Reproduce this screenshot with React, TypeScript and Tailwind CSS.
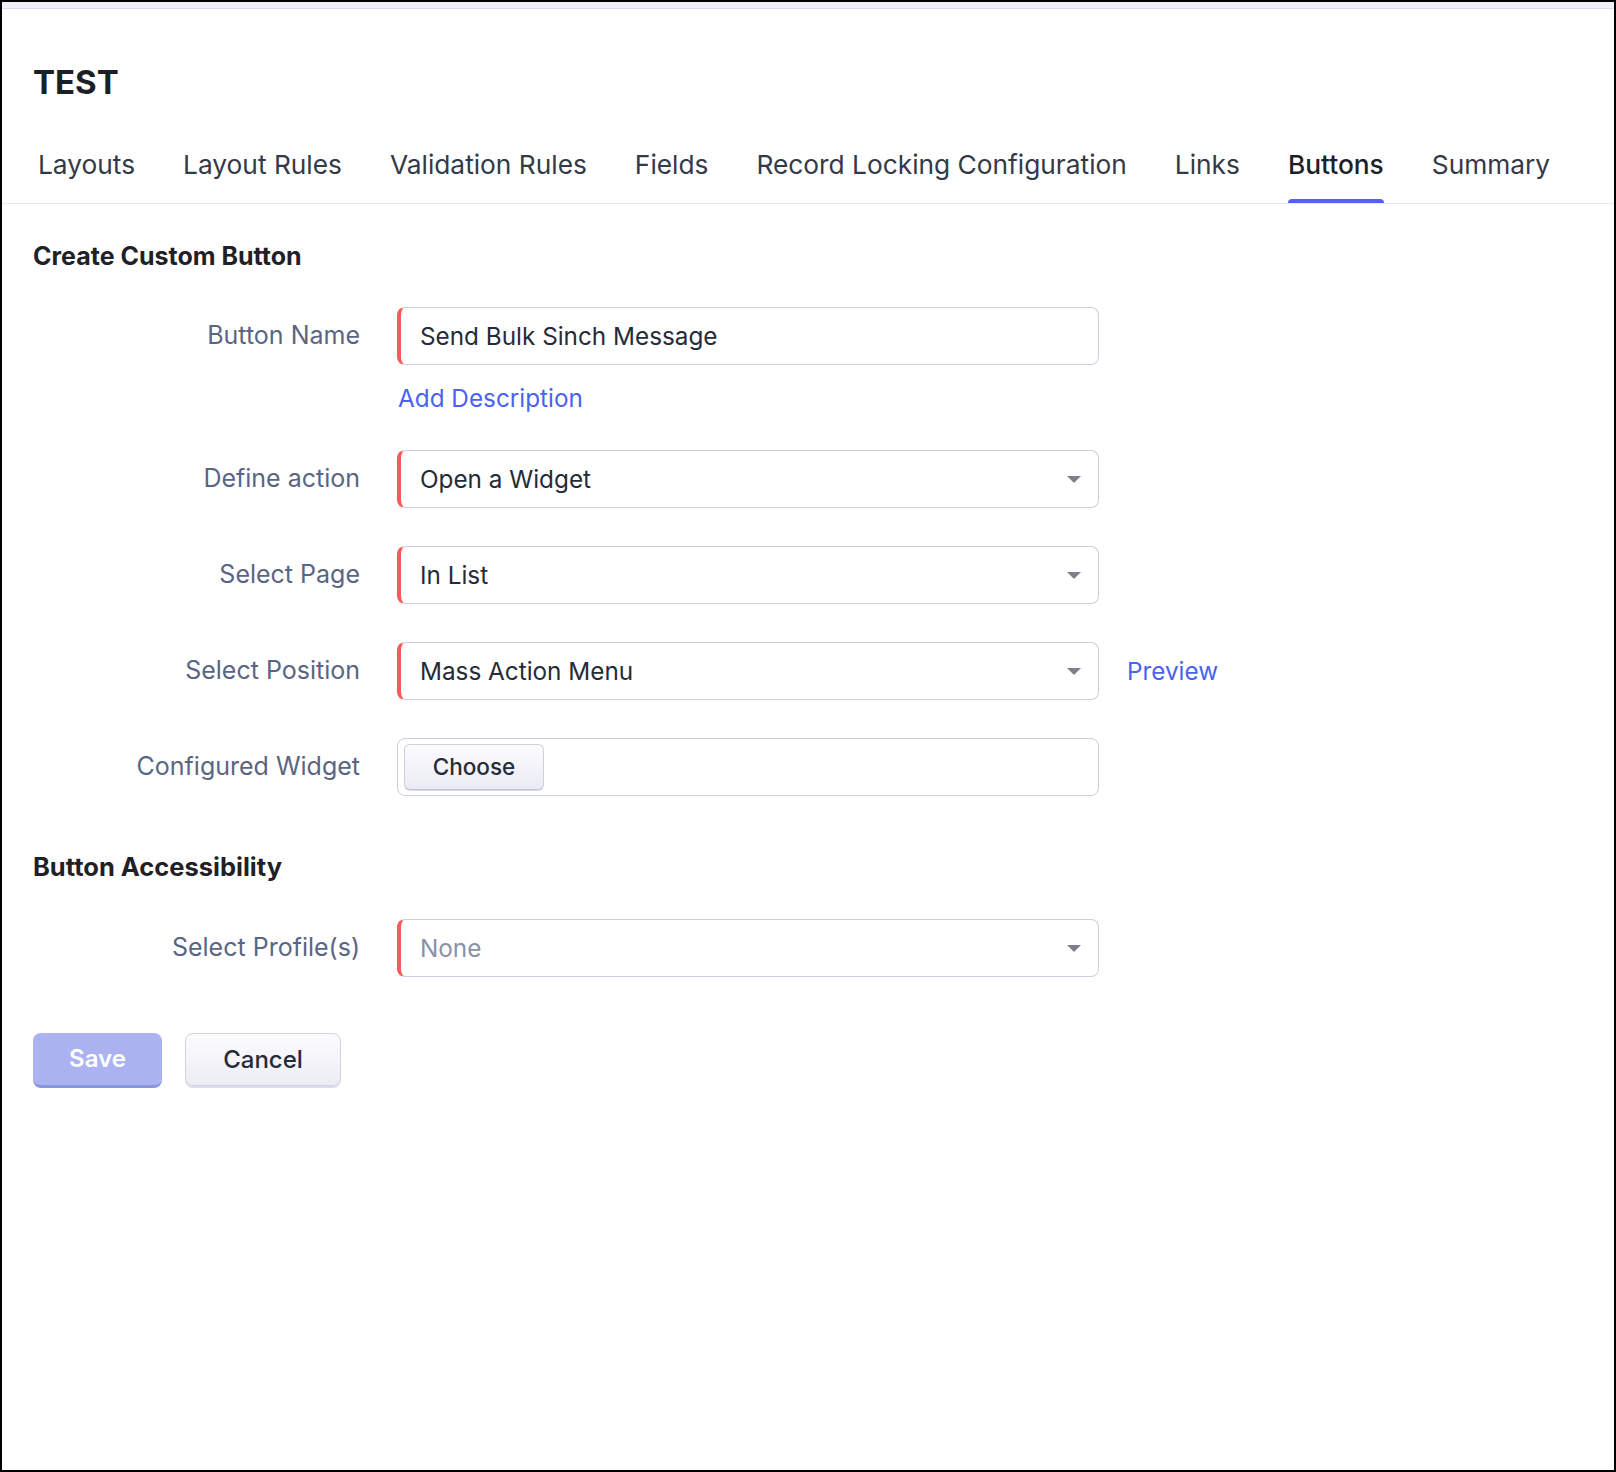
import React from "react";

const tabs = [
  "Layouts",
  "Layout Rules",
  "Validation Rules",
  "Fields",
  "Record Locking Configuration",
  "Links",
  "Buttons",
  "Summary",
];

function Caret() {
  return (
    <svg width="16" height="9" viewBox="0 0 16 9" className="shrink-0">
      <path d="M1 1h14l-7 7z" fill="#7c808b" />
    </svg>
  );
}

function Row({ label, children }: { label: string; children: React.ReactNode }) {
  return (
    <div className="flex items-center">
      <div className="w-[364px] shrink-0 pr-[37px] text-right text-[25px] text-[#5a6583]">{label}</div>
      {children}
    </div>
  );
}

function Field({
  value,
  select = false,
  placeholder = false,
}: {
  value: string;
  select?: boolean;
  placeholder?: boolean;
}) {
  return (
    <div className="flex h-[58px] w-[702px] items-center rounded-lg border border-[#cfcde0] border-l-4 border-l-[#f45b59] pl-[19px] pr-[16px]">
      <span className={`flex-1 text-[24.3px] ${placeholder ? "text-[#8b90a7]" : "text-[#262b38]"}`}>{value}</span>
      {select && <Caret />}
    </div>
  );
}

export default function App() {
  return (
    <div
      className="flex h-[1472px] flex-col border-2 border-black bg-white"
      style={{ fontFamily: "Inter, 'Open Sans', sans-serif" }}
    >
      <div className="h-[7px] shrink-0 border-b border-[#ddd7f6] bg-[#eef0f7]" />

      <h1 className="mt-[53px] h-[40px] pl-[31px] text-[33px] font-bold leading-[40px] text-[#1d1f26]">TEST</h1>

      <div className="mt-[47px] flex gap-[48px] border-b border-[#e8e9ee] pl-[36px]">
        {tabs.map((t) => (
          <div key={t} className="relative pb-[22px]">
            <span
              className={`block text-[26.3px] leading-[32px] ${
                t === "Buttons" ? "font-medium text-[#1c1f29]" : "text-[#343947]"
              }`}
            >
              {t}
            </span>
            {t === "Buttons" && (
              <div className="absolute bottom-0 left-0 right-0 h-[4px] rounded-t bg-[#5661ec]" />
            )}
          </div>
        ))}
      </div>

      <div className="px-[31px]">
        <h2 className="mt-[37px] text-[25px] font-bold leading-[30px] text-[#1f2126]">Create Custom Button</h2>

        <div className="mt-[36px]">
          <Row label="Button Name">
            <Field value="Send Bulk Sinch Message" />
          </Row>
          <div className="mt-[18px] pl-[365px] text-[24.3px] leading-[30px] text-[#4c62ec]">Add Description</div>
        </div>

        <div className="mt-[37px] flex flex-col gap-[38px]">
          <Row label="Define action">
            <Field value="Open a Widget" select />
          </Row>
          <Row label="Select Page">
            <Field value="In List" select />
          </Row>
          <Row label="Select Position">
            <Field value="Mass Action Menu" select />
            <span className="ml-[28px] text-[24.3px] text-[#4c62ec]">Preview</span>
          </Row>
          <Row label="Configured Widget">
            <div className="flex h-[58px] w-[702px] items-center rounded-lg border border-[#cfcde0] pl-[6px]">
              <button className="h-[46px] w-[140px] rounded-md border border-[#cdcfdc] border-b-[#bfc2d4] bg-gradient-to-b from-[#fcfcff] to-[#ebebf4] text-[22.5px] font-medium text-[#262b38] shadow-[0_1px_0_#d9dbe6]">
                Choose
              </button>
            </div>
          </Row>
        </div>

        <h2 className="mt-[56px] text-[25.5px] font-bold leading-[30px] text-[#1f2126]">Button Accessibility</h2>

        <div className="mt-[37px]">
          <Row label="Select Profile(s)">
            <Field value="None" select placeholder />
          </Row>
        </div>

        <div className="mt-[56px] flex items-start gap-[23px]">
          <button className="h-[55px] w-[129px] rounded-lg border-b-[3px] border-[#8c96dc] bg-[#aab3ef] text-[24px] font-semibold text-white">
            Save
          </button>
          <button className="h-[53px] w-[156px] rounded-lg border border-[#d2d3de] bg-gradient-to-b from-[#fcfcff] to-[#ececf4] text-[24px] font-medium text-[#262b38] shadow-[0_2px_0_#dcdde8]">
            Cancel
          </button>
        </div>
      </div>
    </div>
  );
}
